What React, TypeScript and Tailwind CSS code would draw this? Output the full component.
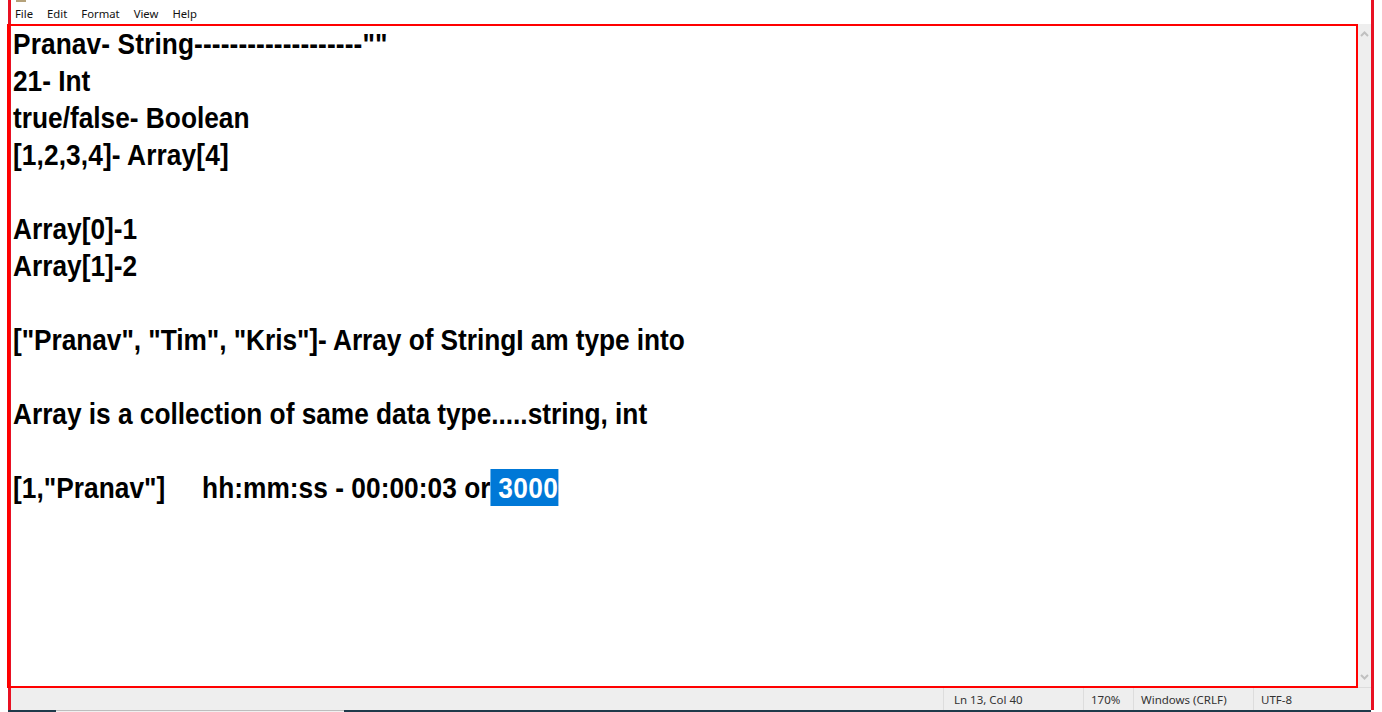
const lines = [
  { text: 'Pranav- String-------------------""', cls: "tracking-[0.12px]" },
  { text: "21- Int", cls: "" },
  { text: "true/false- Boolean", cls: "" },
  { text: "[1,2,3,4]- Array[4]", cls: "tracking-[0.12px]" },
  { text: "", cls: "" },
  { text: "Array[0]-1", cls: "" },
  { text: "Array[1]-2", cls: "" },
  { text: "", cls: "" },
  { text: '["Pranav", "Tim", "Kris"]- Array of StringI am type into', cls: "tracking-[-0.06px]" },
  { text: "", cls: "" },
  { text: "Array is a collection of same data type.....string, int", cls: "tracking-[-0.02px]" },
  { text: "", cls: "" },
];

const menu = ["File", "Edit", "Format", "View", "Help"];

export default function App() {
  return (
    <div className="flex h-[712px] w-[1382px] flex-col overflow-hidden bg-white pl-[8px] pr-[8px] font-['Liberation_Sans',sans-serif]">
      <div className="flex h-[710px] flex-col border-x-[3px] border-x-[#e81123]">
        <div className="ml-[5px] h-[2px] w-[10px] bg-[#b5a27a]" />
        <div className="flex h-[22px] items-center gap-[14px] pl-[4px] pt-[3px] font-['Noto_Sans',sans-serif] text-[11.3px] text-[#111111]">
          {menu.map((m) => (
            <span key={m}>{m}</span>
          ))}
        </div>
        <div className="flex h-[664px]">
          <div className="-ml-[4px] h-full w-[1351px] shrink-0 overflow-hidden border-2 border-l-[3px] border-[#ff0000] pl-[3px] text-black">
            <div className="-mt-[1px] origin-left scale-x-[0.906] text-[29px] font-bold leading-[39px]">
              {lines.map((l, i) => (
                <div key={i} className={`h-[37px] whitespace-pre ${l.cls}`}>
                  {l.text}
                </div>
              ))}
              <div className="h-[37px] whitespace-pre tracking-[0.04px]">
                {'[1,"Pranav"]     hh:mm:ss - 00:00:03 or'}
                <span className="inline-block h-[37px] bg-[#0078d7] tracking-[0.44px] text-white"> 3000</span>
              </div>
            </div>
          </div>
          <div className="flex flex-1 flex-col items-center justify-between border-b border-[#dcdcdc] bg-[#eeeeee] py-[7px]">
            <svg width="9" height="6" viewBox="0 0 9 6" fill="none" stroke="#c0c0c0" strokeWidth="2">
              <path d="M1 5l3.5-3.5L8 5" />
            </svg>
            <svg width="9" height="6" viewBox="0 0 9 6" fill="none" stroke="#c0c0c0" strokeWidth="2">
              <path d="M1 1l3.5 3.5L8 1" />
            </svg>
          </div>
        </div>
        <div className="flex h-[22px] items-center bg-[#eeeeee] font-['Noto_Sans',sans-serif] text-[11.5px] text-[#333333]">
          <div className="w-[932px]" />
          <div className="h-full w-[140px] border-l border-[#dddddd] pl-[10px] leading-[24px]">Ln 13, Col 40</div>
          <div className="h-full w-[50px] border-l border-[#dddddd] pl-[7px] leading-[24px]">170%</div>
          <div className="h-full w-[120px] border-l border-[#dddddd] pl-[7px] leading-[24px]">Windows (CRLF)</div>
          <div className="h-full flex-1 border-l border-[#dddddd] pl-[7px] leading-[24px]">UTF-8</div>
        </div>
      </div>
      <div className="flex h-[2px] pr-[3px]">
        <div className="w-[48px] bg-[#1f3a4a]" />
        <div className="w-[288px] border-t border-[#bdbdbd] bg-[#f0f0f0]" />
        <div className="flex-1 bg-[#1f3a4a]" />
      </div>
    </div>
  );
}
